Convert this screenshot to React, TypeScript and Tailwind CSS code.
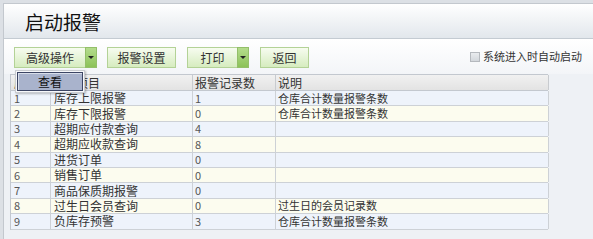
import React from 'react';

const rows = [
  { no: '1', name: '库存上限报警', count: '1', note: '仓库合计数量报警条数' },
  { no: '2', name: '库存下限报警', count: '0', note: '仓库合计数量报警条数' },
  { no: '3', name: '超期应付款查询', count: '4', note: '' },
  { no: '4', name: '超期应收款查询', count: '8', note: '' },
  { no: '5', name: '进货订单', count: '0', note: '' },
  { no: '6', name: '销售订单', count: '0', note: '' },
  { no: '7', name: '商品保质期报警', count: '0', note: '' },
  { no: '8', name: '过生日会员查询', count: '0', note: '过生日的会员记录数' },
  { no: '9', name: '负库存预警', count: '3', note: '仓库合计数量报警条数' },
];

function GreenButton({ label, width, dropdown }: { label: string; width: string; dropdown?: boolean }) {
  return (
    <div className="flex h-[21px]">
      <div
        className={`${width} flex items-center justify-center border border-[#b3d296] bg-gradient-to-b from-[#f7fcf0] to-[#d6ecbf] text-[12px] text-[#333] ${dropdown ? 'border-r-0' : ''}`}
      >
        {label}
      </div>
      {dropdown && (
        <div className="flex w-[12px] items-center justify-center border border-[#93bf69] bg-gradient-to-b from-[#b4dc8c] to-[#8cc258]">
          <span className="h-0 w-0 border-x-[3px] border-t-[3px] border-x-transparent border-t-[#222]"></span>
        </div>
      )}
    </div>
  );
}

export default function App() {
  return (
    <div
      className="h-[239px] w-[593px] overflow-hidden bg-[#dce0e5]"
      style={{ fontFamily: '"Noto Sans CJK SC", "Noto Sans", sans-serif' }}
    >
      <div className="relative ml-[3px] mt-[3px] h-[236px] border-l border-t border-[#c3c8ce] bg-[#eef1f5]">
        {/* title */}
        <div className="flex h-[35px] items-center border-b border-[#c4cbd2] bg-gradient-to-b from-white to-[#e2e7ec] pl-[21px]">
          <span className="text-[19px] leading-none text-[#111]">启动报警</span>
        </div>

        {/* toolbar */}
        <div className="flex h-[35px] items-start bg-gradient-to-b from-white to-[#f3f5f8] pl-[10px] pr-[11px] pt-[8px]">
          <GreenButton label="高级操作" width="w-[71px]" dropdown />
          <div className="ml-[10px]">
            <GreenButton label="报警设置" width="w-[69px]" />
          </div>
          <div className="ml-[11px]">
            <GreenButton label="打印" width="w-[50px]" dropdown />
          </div>
          <div className="ml-[11px]">
            <GreenButton label="返回" width="w-[49px]" />
          </div>
          <div className="ml-auto mt-[4px] flex items-center gap-[3px] text-[11px] leading-none text-[#333]">
            <span className="h-[10px] w-[10px] border border-[#b5b9be] bg-gradient-to-b from-[#e9ebee] to-[#d3d7dc]"></span>
            系统进入时自动启动
          </div>
        </div>

        {/* table */}
        <div className="ml-[6px] w-[538px] border-l border-t border-[#c3c8cf] text-[12px] leading-none text-[#333]">
          <div className="grid h-[16px] grid-cols-[40px_142px_83px_273px] border-b border-[#c3c8cf] bg-gradient-to-b from-[#f1f1f1] to-[#e3e3e3]">
            <div className="flex items-center border-r border-[#c8cbcf] pl-[3px]">序号</div>
            <div className="flex items-center border-r border-[#c8cbcf] pl-[1px]">报警项目</div>
            <div className="flex items-center border-r border-[#c8cbcf] pl-[2px]">报警记录数</div>
            <div className="flex items-center border-r border-[#c8cbcf] pl-[2px]">说明</div>
          </div>
          {rows.map((r, i) => (
            <div
              key={r.no}
              className={`grid h-[15.4px] grid-cols-[40px_142px_83px_273px] border-b border-[#cdd1d6] ${i % 2 === 0 ? 'bg-[#eef3fb]' : 'bg-[#fcfcef]'}`}
            >
              <div className="flex items-center border-r border-[#cdd1d6] pl-[3px] text-[11px] text-[#555]">{r.no}</div>
              <div className="flex items-center border-r border-[#cdd1d6] pl-[3px]">{r.name}</div>
              <div className="flex items-center border-r border-[#cdd1d6] pl-[2px] text-[11px] text-[#555]">{r.count}</div>
              <div className="flex items-center border-r border-[#cdd1d6] pl-[2px] text-[11px]">{r.note}</div>
            </div>
          ))}
        </div>

        {/* dropdown menu from 高级操作 */}
        <div className="absolute left-[11px] top-[66px] border border-[#c9ccd1] bg-[#f7f8fa] p-[1px] shadow-[1px_1px_2px_rgba(0,0,0,0.25)]">
          <div className="flex h-[19px] w-[66px] items-center justify-center border border-[#3c4564] bg-[#a9b3cc] text-[12px] leading-none text-[#111] shadow-[inset_1px_1px_0_#d8deea]">
            查看
          </div>
        </div>
      </div>
    </div>
  );
}
